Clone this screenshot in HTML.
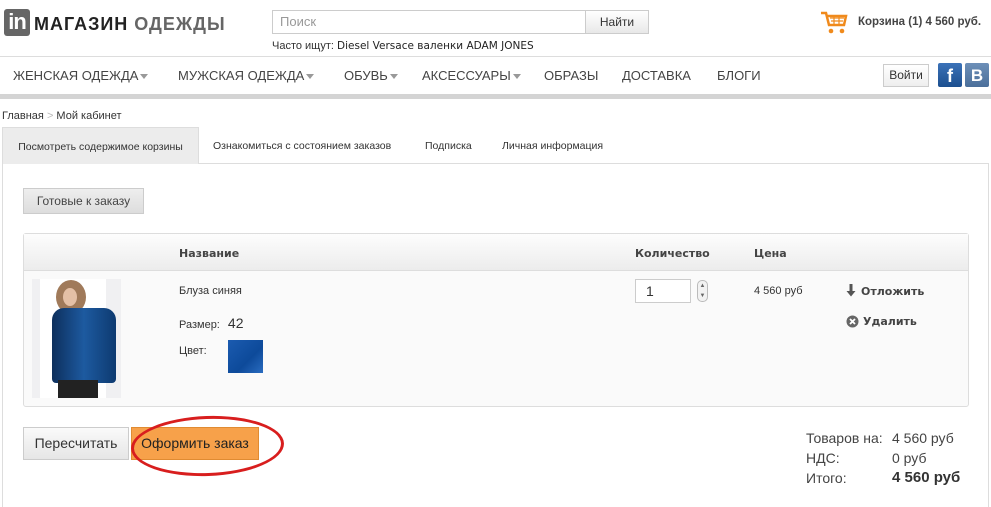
<!DOCTYPE html>
<html><head><meta charset="utf-8"><style>
*{margin:0;padding:0;box-sizing:border-box}
body{width:991px;height:507px;background:#fff;font-family:"Liberation Sans","DejaVu Sans",sans-serif;color:#333;position:relative;overflow:hidden}
.a{position:absolute}
.nav span{position:absolute;top:68px;font-size:13px;color:#444;white-space:nowrap}
.tri{display:inline-block;width:0;height:0;border-left:4px solid transparent;border-right:4px solid transparent;border-top:5px solid #999;vertical-align:middle;margin-left:2px}
.tab{position:absolute;top:127px;height:37px;font-size:10.5px;color:#333;line-height:39px;white-space:nowrap}
.b{font-family:"DejaVu Sans",sans-serif;font-weight:bold;font-size:11px;color:#444;white-space:nowrap}
.t{position:absolute;font-size:14px;color:#444;white-space:nowrap}
</style></head><body>
<div class="a" style="left:4px;top:9px;width:26px;height:27px;background:#666;border-radius:3px;color:#fff;font-size:22px;font-weight:bold;line-height:26px;text-align:center;letter-spacing:-1px">in</div>
<div class="a" style="left:34px;top:14px;font-size:18px;font-weight:bold;letter-spacing:1px;color:#222">МАГАЗИН <span style="color:#666">ОДЕЖДЫ</span></div>
<div class="a" style="left:272px;top:10px;width:314px;height:24px;border:1px solid #ccc;font-size:13px;color:#999;padding:3px 7px">Поиск</div>
<div class="a" style="left:585px;top:10px;width:64px;height:24px;border:1px solid #ccc;background:linear-gradient(#fff,#e8e8e8);font-size:12px;line-height:22px;text-align:center;color:#333">Найти</div>
<div class="a" style="left:272px;top:40px;font-size:11px;color:#333;white-space:nowrap">Часто ищут: <span style="font-family:'DejaVu Sans';font-size:10.5px;color:#222">Diesel Versace валенки ADAM JONES</span></div>
<svg class="a" style="left:820px;top:11px" width="28" height="24" viewBox="0 0 28 24"><path d="M1 2h5l3 12h15l2-9H7" fill="none" stroke="#f08a1c" stroke-width="2.5"/><path d="M10 7h14M11 10h12M14 5v9M19 5v9" stroke="#f08a1c" stroke-width="1.2"/><circle cx="11" cy="20" r="2.3" fill="#f08a1c"/><circle cx="22" cy="20" r="2.3" fill="#f08a1c"/></svg>
<div class="a" style="left:858px;top:16px;font-size:11.5px;font-weight:bold;color:#444;white-space:nowrap">Корзина (1) 4 560 руб.</div>
<div class="a" style="left:0;top:56px;width:991px;height:1px;background:#ddd"></div>
<div class="nav">
<span style="left:13px">ЖЕНСКАЯ ОДЕЖДА<i class="tri"></i></span>
<span style="left:178px">МУЖСКАЯ ОДЕЖДА<i class="tri"></i></span>
<span style="left:344px">ОБУВЬ<i class="tri"></i></span>
<span style="left:422px">АКСЕССУАРЫ<i class="tri"></i></span>
<span style="left:544px">ОБРАЗЫ</span>
<span style="left:622px">ДОСТАВКА</span>
<span style="left:717px">БЛОГИ</span>
</div>
<div class="a" style="left:883px;top:64px;width:46px;height:23px;border:1px solid #ccc;background:linear-gradient(#fff,#eee);font-size:12px;line-height:21px;text-align:center;color:#333">Войти</div>
<div class="a" style="left:938px;top:63px;width:24px;height:24px;background:linear-gradient(#3b72b8,#1c4f8f);border-radius:2px;color:#fff;font-weight:bold;font-size:18px;line-height:26px;text-align:center">f</div>
<div class="a" style="left:965px;top:63px;width:24px;height:24px;background:linear-gradient(#6d8fb8,#4b6f9a);border-radius:2px;color:#fff;font-weight:bold;font-size:17px;line-height:25px;text-align:center">B</div>
<div class="a" style="left:0;top:94px;width:991px;height:5px;background:#d4d4d4"></div>
<div class="a" style="left:2px;top:110px;font-size:11px;color:#333">Главная <span style="color:#bbb">&gt;</span> Мой кабинет</div>
<div class="a" style="left:2px;top:163px;width:987px;height:1px;background:#ddd"></div>
<div class="tab" style="left:2px;width:197px;background:#ececec;border:1px solid #ddd;border-bottom:none;text-align:center">Посмотреть содержимое корзины</div>
<div class="tab" style="left:213px">Ознакомиться с состоянием заказов</div>
<div class="tab" style="left:425px">Подписка</div>
<div class="tab" style="left:502px">Личная информация</div>
<div class="a" style="left:2px;top:163px;width:1px;height:344px;background:#ddd"></div>
<div class="a" style="left:988px;top:163px;width:1px;height:344px;background:#ddd"></div>
<div class="a" style="left:23px;top:188px;width:121px;height:26px;background:linear-gradient(#eee,#ddd);border:1px solid #ccc;font-size:12px;line-height:24px;text-align:center;color:#444">Готовые к заказу</div>
<div class="a" style="left:23px;top:233px;width:946px;height:174px;border:1px solid #ddd;border-radius:3px;background:#fafafa"></div>
<div class="a" style="left:24px;top:234px;width:944px;height:37px;background:linear-gradient(#fdfdfd,#ececec);border-bottom:1px solid #ddd"></div>
<div class="a b" style="left:179px;top:247px">Название</div>
<div class="a b" style="left:635px;top:247px">Количество</div>
<div class="a b" style="left:754px;top:247px">Цена</div>
<div class="a" style="left:32px;top:279px;width:89px;height:119px;background:#f0f0f2"></div>
<div class="a" style="left:40px;top:279px;width:66px;height:119px;background:#fff"></div>
<div class="a" style="left:56px;top:280px;width:30px;height:34px;background:#a07a5a;border-radius:50%"></div>
<div class="a" style="left:63px;top:288px;width:14px;height:18px;background:#e4c0a6;border-radius:50%"></div>
<div class="a" style="left:52px;top:308px;width:64px;height:75px;background:linear-gradient(90deg,#0d2f5c,#1d5aa0,#0d3a70);border-radius:12px 12px 4px 4px"></div>
<div class="a" style="left:58px;top:380px;width:40px;height:18px;background:#222"></div>
<div class="a" style="left:179px;top:285px;font-size:11px;color:#333">Блуза синяя</div>
<div class="a" style="left:179px;top:315px;font-size:11px;color:#333">Размер: <span style="font-size:14px;margin-left:5px">42</span></div>
<div class="a" style="left:179px;top:345px;font-size:11px;color:#333">Цвет:</div>
<div class="a" style="left:228px;top:340px;width:35px;height:33px;background:linear-gradient(135deg,#1b5bb0,#0d4a9a 60%,#2a6cc0)"></div>
<div class="a" style="left:635px;top:279px;width:56px;height:24px;border:1px solid #ccc;background:#fff;font-size:14px;padding:3px 10px;color:#333">1</div>
<div class="a" style="left:697px;top:280px;width:11px;height:22px;border:1px solid #bbb;border-radius:5px;background:#f2f2f2;font-size:6px;line-height:10px;text-align:center;color:#666">▲<br>▼</div>
<div class="a" style="left:754px;top:285px;font-size:11px;color:#333">4 560 руб</div>
<svg class="a" style="left:846px;top:284px" width="10" height="13" viewBox="0 0 10 13"><path d="M3.5 0h3v7h3L5 12.5 0.5 7h3z" fill="#555"/></svg>
<div class="a b" style="left:861px;top:285px">Отложить</div>
<svg class="a" style="left:846px;top:315px" width="13" height="13" viewBox="0 0 13 13"><circle cx="6.5" cy="6.5" r="6" fill="#666"/><path d="M4 4l5 5M9 4l-5 5" stroke="#fff" stroke-width="1.8"/></svg>
<div class="a b" style="left:863px;top:315px">Удалить</div>
<div class="a" style="left:23px;top:427px;width:106px;height:33px;border:1px solid #ccc;background:linear-gradient(#fafafa,#e6e6e6);font-size:14px;line-height:31px;text-align:center;color:#333">Пересчитать</div>
<div class="a" style="left:131px;top:427px;width:128px;height:33px;background:#f7a14a;border:1px solid #e08b32;font-size:14px;line-height:31px;text-align:center;color:#222">Оформить заказ</div>
<div class="a" style="left:131px;top:416px;width:153px;height:60px;border:3px solid #d81e1e;border-radius:50%;transform:rotate(-2deg)"></div>
<div class="t" style="left:806px;top:430px">Товаров на:</div>
<div class="t" style="left:892px;top:430px">4 560 руб</div>
<div class="t" style="left:806px;top:450px">НДС:</div>
<div class="t" style="left:892px;top:450px">0 руб</div>
<div class="t" style="left:806px;top:470px">Итого:</div>
<div class="t" style="left:892px;top:469px;font-size:15px;font-weight:bold;color:#333">4 560 руб</div>
</body></html>
